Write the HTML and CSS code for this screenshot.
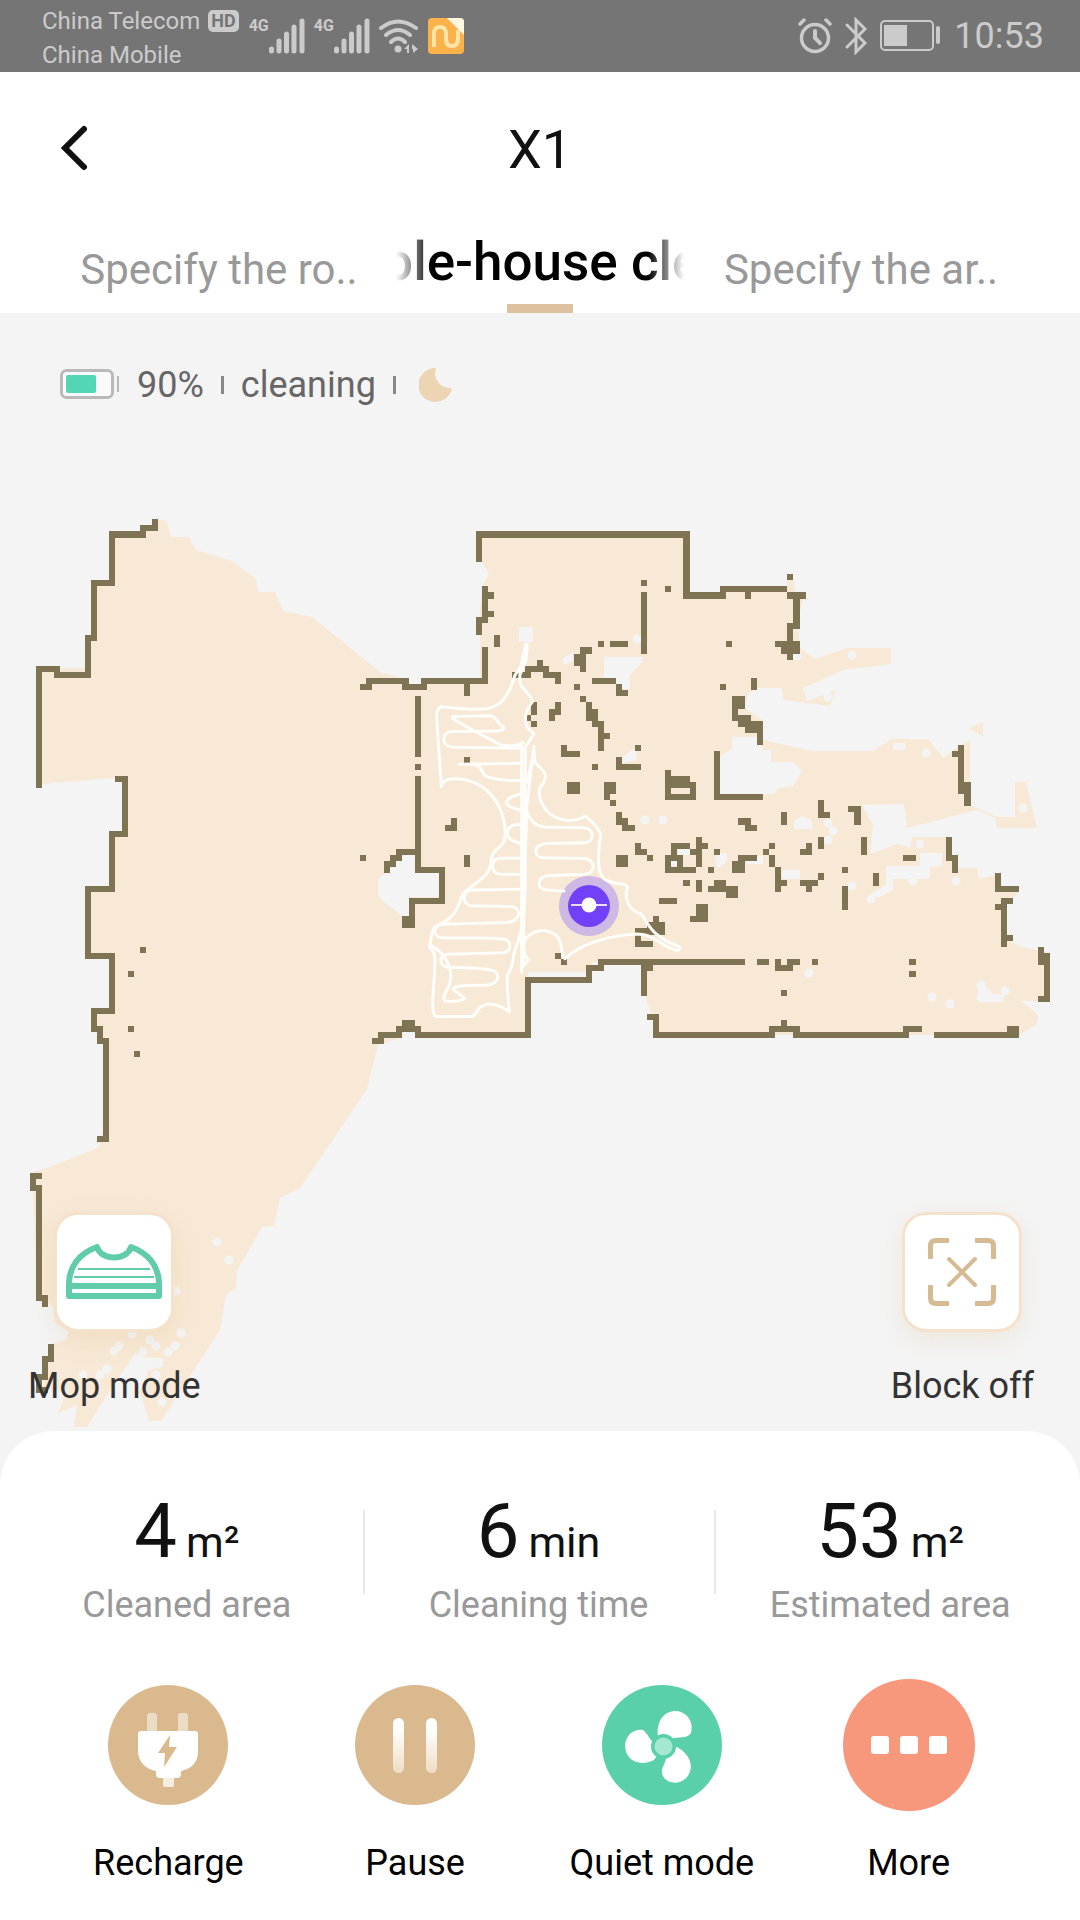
FILE: index.html
```html
<!DOCTYPE html>
<html lang="en">
<head>
<meta charset="utf-8">
<meta name="viewport" content="width=device-width, initial-scale=1">
<title>X1</title>
<link rel="stylesheet" href="styles.css">
</head>
<body>
<div class="app">
  <div class="statusbar">
    <div class="carriers">
      <div class="carrier">China Telecom <span class="hd">HD</span></div>
      <div class="carrier">China Mobile</div>
    </div>
    <div class="signals">
      <div class="signal"><span class="net">4G</span>
        <svg width="36" height="36" viewBox="0 0 36 36"><path d="M2.500 31v2M10 23v10M17.500 16v17M25 9v24M33 3v30" stroke="currentColor" stroke-width="5" stroke-linecap="round"/></svg></div>
      <div class="signal"><span class="net">4G</span>
        <svg width="36" height="36" viewBox="0 0 36 36"><path d="M2.500 31v2M10 23v10M17.500 16v17M25 9v24M33 3v30" stroke="currentColor" stroke-width="5" stroke-linecap="round"/></svg></div>
      <svg class="wifi" width="40" height="36" viewBox="0 0 40 36"><g fill="none" stroke="currentColor" stroke-width="4" stroke-linecap="round"><path d="M2 10Q19 -3 37 10M7 17Q19 7 31 17M12 24Q19 17 26 24"/></g><circle cx="19" cy="31" r="3.500" fill="currentColor"/><path d="M25 31l5-5v9h-2v-4zM33 26l6 5-5 4v-4h-1z" fill="currentColor"/></svg>
      <svg width="36" height="38" viewBox="0 0 36 38"><rect y="1" width="36" height="36" rx="4" fill="#fbb24a"/><path d="M19 1h13q4 0 4 4v13z" fill="#fff6e4"/><path d="M6 30V17q0-7 6-7t6 7v5q0 7 6 7t6-7V13" fill="none" stroke="#ffe5a8" stroke-width="4"/></svg>
    </div>
    <div class="system">
      <svg width="34" height="38" viewBox="0 0 34 38" fill="none" stroke="currentColor" stroke-linecap="round"><circle cx="17" cy="21" r="13.500" stroke-width="3.500"/><path d="M17 14v7l5 5" stroke-width="4"/><path d="M2 7l4-4M32 7l-4-4" stroke-width="3.500"/></svg>
      <svg width="24" height="38" viewBox="0 0 24 38" fill="none" stroke="currentColor" stroke-width="3" stroke-linecap="round"><path d="M3 8l18 18-9 9V3l9 9L3 30"/></svg>
      <svg width="62" height="32" viewBox="0 0 62 32"><rect x="1" y="1" width="52" height="29" rx="4" fill="none" stroke="currentColor" stroke-width="2"/><rect x="4" y="5" width="23" height="21" fill="currentColor"/><rect x="56" y="6" width="4" height="18" rx="2" fill="currentColor"/></svg>
      <span class="clock">10:53</span>
    </div>
  </div>

  <header class="header">
    <button class="back" type="button" aria-label="Back"><svg width="30" height="46" viewBox="0 0 30 46"><path d="M24 4L5 23l19 19" fill="none" stroke="#111" stroke-width="6" stroke-linecap="round"/></svg></button>
    <h1 class="title">X1</h1>
  </header>

  <nav class="tabs">
    <a class="tab" href="#room">Specify the ro..</a>
    <a class="tab active" href="#whole"><span class="marquee">Whole-house cleaning</span></a>
    <a class="tab" href="#area">Specify the ar..</a>
  </nav>

  <main class="map">
    <svg class="plan" viewBox="0 313 1080 1118" role="img" aria-label="Floor map">
      <g class="floor">
        <path d="M158 520H166L171 537H189L196 550 232 561 256 579 258 592H275L283 611 312 617 380 672 400 678H480V645L480 610 482 587 489 573 482 562H479V532H688V594H726V587H787V580H794L795 592H805L800 611 799 641 800 648 814 659 848 648H891V664L843 670 803 688 807 701 836 690 830 706 783 700 782 688H757L748 694 745 708 763 721V740L812 751H873L892 739H928L943 758 952 751 970 740V805L998 817H1015V782H1026L1037 828H997L995 818 977 810 907 828 904 804 862 805 873 825 870 854 897 844 910 848 912 837H947L952 856 958 868H977L979 879 995 875 1001 886 1019 892 1007 904V940L1022 947 1050 953V1001H1020L1034 1011 1038 1016 1037 1024 1019 1035H655V1014L650 1011 645 995V962H592V972H528V1034H415V1031H403V1037L378 1045 367 1089 300 1188 280 1198 274 1226 262 1227 237 1271 236 1288 226 1295 220 1330 161 1421H149L140 1393 110 1390 87 1427H74L77 1405 57 1414 67 1393 43 1388 50 1345 65 1340 69 1332 55 1322 53 1307 37 1293 33 1193V1172L47 1168 98 1148 103 1130V1040L97 1032 94 1010H113V955H88V888H113V833H125V777L42 784V668H88V640H94V583H113V533H145L153 522Z"/>
        <path d="M968 729L983 722V736Z"/>
      </g>
      <g class="void">
        <path d="M402 855H415V872H439V897H409V916H402L384 902 378 895V879L390 870ZM409 676H421V684H409ZM604 657H642V662L630 675V689H616V678H604ZM562 659L573 652V661L564 665ZM622 757L634 749 637 754V760L622 763ZM732 737H757L763 750H771V762H793L802 771 793 786 777 789 775 794H720V756L732 749ZM886 866H920V853H942V866L930 867V879H893V890L880 897H871L872 893 886 885ZM671 860H678V866H671ZM678 849H690V855H678ZM716 853H727V861L719 868 715 864ZM747 860L763 855V864H747ZM782 870H800V879H782ZM794 820L803 816 812 821 813 829H794ZM978 987L984 984 993 994H1001L1005 989 1003 1002H978ZM893 743H905V750H893ZM519 627H533V642H519ZM135 1353L143 1357 163 1358V1367L147 1370V1382L133 1397 113 1392 117 1380Z"/>
        <path class="specks" d="M645 820h0M663 820h0M828 823h0M833 831h0M828 840h0M852 886h0M871 899h0M913 881h0M920 844h0M956 881h0M926 753h0M1023 808h0M852 655h0M828 697h0M797 656h0M809 973h0M932 997h0M950 1004h0M1005 991h0M981 985h0M981 998h0M637 639h0M217 1242h0M229 1260h0M176 1291h0M181 1333h0M132 1334h0M150 1340h0M156 1346h0M175 1346h0M168 1352h0M119 1346h0M114 1351h0M107 1369h0M143 1352h0M100 1375h0M83 1375h0M156 1375h0M162 1402h0M123 1395h0"/>
      </g>
      <!-- one unit is one scanned grid cell -->
      <g class="walls" transform="translate(32.950 522.250) scale(6.108)">
        <path d="M20 0V1H18V2H13V10H10V19H9V25H4V24H1V43M14 42H15V51H13V60H9V71H13V80H10V83H11V85H12V101H11M1 107H0V109H1V127H2V128M3 135V137H2V140H1V142H2M18 70h0M16 74h0M16 83h0M17 87h0M54 55h0"/>
        <path d="M54 27H55V26H61V27H64V26H74V21M71 27V28M73 6V2H107V12H113V11H123M117 11V12M124 12H126M125 12V17H124V22M122 20H125M123 21H125M124 9h0M74 11V16H73V18M74 12H75M74 15H75M76 19V20M100 10h0M100 12V21M104 11h0"/>
        <path d="M93 20h0M95 20H97M91 21H90V24M89 22V23H90M92 26H95M96 27V28H97M89 27h0M90 29h0M91 30V32M92 31V33H93V37M93 35H94M83 23V24M81 24H84V25H86V26M79 25H81V24M82 30V31M81 32h0M82 33h0M86 30V31H85V32M87 37V38H89M99 37h0M96 39V40H99M92 40h0M88 43H89V44H88ZM94 43H95V44H94V45M95 46h0M96 48V49H97V50H98"/>
        <path d="M104 41V45H108V43H104V42H107V43M112 38V45H119M63 29V38M63 40h0M63 42V57H67V62H62V66H61V65M63 54H60V55H59V56H58V57M69 49V50H68M71 39h0M71 55V56M56 85H57V84H60V83H63V84H81V75H91V73H93V72H116M61 83V82H62V83M100 72V77M101 73h0M101 81H102V84H121V83H125V84H143V83H145M123 82V83M148 84H161V83H160"/>
        <path d="M86 71h0M87 72h0M99 67V69H101M99 67H100M102 65V67M101 66H103V67H101ZM103 62H105M109 63H110V65H108M109 63V65M96 55H97V56H96ZM99 53V54H100M101 55h0M107 53H105V55M104 55V57H108M106 55V57M104 55H106M108 54H109M109 52V56M109 53H110M112 54h0M111 57h0M107 59h0M109 59V60M111 60H115V61H114V60M112 59H113V60"/>
        <path d="M114 20h0M113 27h0M118 26V27M116 30V29H115V32H117V33H119V36M116 32V33M117 34H119M116 29V30H115M123 48V49M116 49H117V50H118M129 46V48H130M134 47H135V49M129 52V53M136 52V54M127 53V54H126M121 53h0M120 54h0M121 55V56M122 57V60M122 59H123M118 55H116V57H115V56H116M126 59H128M127 59V60M129 58h0M133 57h0M133 60V63M138 58V59M143 55H144M150 52V55H151V57M152 37V44M151 38H152M153 43V46M152 43H153M158 58V60H161M160 62H159V69M158 63H159M160 68H159M165 70V72M165 71H166V78H165M119 72H120M122 72V73H124V72H125M128 72h0M144 72h0M144 74h0M123 77h0"/>
      </g>
      <circle cx="589" cy="906" r="30" fill="#cdb9e4"/>
      <g class="track" transform="translate(340 500) scale(.33333 .35714)">
        <path d="M557 405C555 460 540 470 525 490C515 520 500 572 445 584C400 590 340 582 305 579C285 585 290 600 292 640L304 802C310 780 330 780 360 781C440 790 495 850 496 940C490 985 455 965 452 1020C445 1065 380 1080 365 1110C350 1160 330 1175 285 1195C270 1215 275 1230 268 1252C290 1270 285 1290 283 1330L278 1400C278 1430 280 1446 290 1446H395C415 1440 408 1425 425 1418C450 1405 475 1412 508 1433C505 1400 500 1380 502 1330C520 1310 515 1290 525 1260C560 1180 555 1100 556 1000L560 860 582 690"/>
        <path d="M268 1245C320 1270 335 1310 332 1340C330 1370 300 1390 315 1403C340 1405 360 1405 372 1396C360 1380 345 1380 340 1368C350 1358 380 1360 440 1358C480 1355 480 1325 460 1318C420 1308 340 1310 325 1308C295 1305 295 1275 325 1272L490 1268C515 1265 515 1235 495 1230C430 1222 330 1230 300 1225C275 1215 280 1190 310 1188L500 1183C545 1180 545 1142 515 1138L390 1136C365 1125 368 1095 395 1092L545 1090"/>
        <path d="M548 1050C520 1045 480 1052 468 1045C450 1030 455 1005 480 1003H548M548 963C510 955 500 945 502 930C505 912 520 908 548 908M548 870C510 862 498 855 500 845C505 830 530 825 550 822M550 785C500 788 450 780 435 772C420 750 420 745 400 740H358L540 737M548 695L340 692C300 690 305 650 335 648L470 647C490 645 495 640 490 636C470 625 470 605 450 604L340 606C325 610 360 625 480 685C510 690 530 690 550 680"/>
        <path d="M545 1322V680M550 1300L556 700M557 405C550 440 535 480 540 510C545 535 575 540 577 566C555 590 550 620 565 640L582 655 550 700M562 405L558 450 540 490"/>
        <path d="M562 790L582 700 585 735C620 765 620 770 612 790C590 810 595 840 620 870C650 900 700 905 737 885C790 930 785 940 778 960C775 1010 770 1050 800 1065C830 1080 860 1070 863 1085C850 1120 870 1150 905 1160C930 1200 945 1225 1020 1252Q1022 1270 980 1250C930 1220 920 1215 885 1215C800 1220 720 1245 675 1284C660 1270 670 1240 650 1220C620 1200 590 1200 560 1225C545 1240 550 1270 565 1288L545 1310"/>
        <path d="M558 860C565 900 590 914 620 916L730 918C765 920 765 955 735 960L620 962C580 965 580 995 605 1002L735 1004C770 1010 765 1045 735 1048L620 1052C590 1060 590 1088 620 1092L672 1095"/>
      </g>
      <circle cx="589" cy="906" r="21" fill="#7240f8"/>
      <path d="M571 905H607" stroke="#e9dcff" stroke-width="2"/>
      <circle cx="589" cy="905" r="7.500" fill="#fff"/>
    </svg>

    <div class="overlay">
      <div class="state">
        <svg width="60" height="32" viewBox="0 0 60 32"><rect x="1.500" y="1.500" width="51" height="27" rx="5" fill="#fafafa" stroke="#b9b9b9" stroke-width="3"/><rect x="6" y="6" width="30" height="18" rx="2" fill="#52d6b4"/><path d="M58 7v16" stroke="#b9b9b9" stroke-width="2"/></svg>
        <span>90%</span><i class="bar"></i><span>cleaning</span><i class="bar"></i>
        <svg class="moon" width="34" height="34" viewBox="0 0 34 34"><path d="M17 0A17 17 0 1 0 33 20A15 15 0 0 1 17 0Z" fill="#edd5b4"/></svg>
      </div>
      <div class="tools">
        <button class="tool" type="button">
          <span class="tile"><svg width="96" height="60" viewBox="0 0 96 60"><path d="M31 5C14 11 3 24 3 42V54H93V42C93 24 82 11 65 5C61 19 35 19 31 5Z" fill="none" stroke="#60ccaa" stroke-width="6" stroke-linejoin="round"/><path d="M12 27H84M8 35H88" stroke="#60ccaa" stroke-width="2"/><path d="M4 44H92" stroke="#60ccaa" stroke-width="6"/></svg></span>
          Mop mode
        </button>
        <button class="tool" type="button">
          <span class="tile"><svg width="68" height="68" viewBox="0 0 68 68" fill="none" stroke="#d6ba91" stroke-width="5"><path d="M2.500 21V8Q2.500 2.500 8 2.500H21M47 2.500H60Q65.500 2.500 65.500 8V21M65.500 47V60Q65.500 65.500 60 65.500H47M21 65.500H8Q2.500 65.500 2.500 60V47"/><path d="M21 21L47 47M47 21L21 47" stroke-width="4" stroke-linecap="round"/></svg></span>
          Block off
        </button>
      </div>
    </div>
  </main>

  <section class="panel">
    <dl class="stats">
      <div class="stat"><dt>Cleaned area</dt><dd>4<small>m²</small></dd></div>
      <div class="stat"><dt>Cleaning time</dt><dd>6<small>min</small></dd></div>
      <div class="stat"><dt>Estimated area</dt><dd>53<small>m²</small></dd></div>
    </dl>
    <div class="actions">
      <button class="action" type="button">
        <span class="icon"><svg width="120" height="120" viewBox="0 0 120 120"><circle cx="60" cy="60" r="60" fill="#dab98f"/><path d="M39 46V31q0-3 3-3h4q3 0 3 3v15zM70 46V31q0-3 3-3h4q3 0 3 3v15z" fill="#ecdcc6"/><path d="M55 92h11v8q0 2-2 2h-7q-2 0-2-2z" fill="#f6ecdf"/><path d="M33 46H87q3 0 3 3V66C90 78 83 84 73 86V89q0 4-4 4H52q-4 0-4-4V86C37 84 30 76 30 66V49q0-3 3-3Z" fill="#fff"/><path d="M62 50L50 68H57L56 82 69 62H61Z" fill="#dab98f"/></svg></span>
        Recharge
      </button>
      <button class="action" type="button">
        <span class="icon"><svg width="120" height="120" viewBox="0 0 120 120"><defs><linearGradient id="fade" x1="0" y1="0" x2="0" y2="1"><stop offset=".2" stop-color="#fff"/><stop offset="1" stop-color="#efdcc4"/></linearGradient></defs><circle cx="60" cy="60" r="60" fill="#dab98f"/><rect x="38" y="33" width="11" height="55" rx="5.500" fill="url(#fade)"/><rect x="71" y="33" width="11" height="55" rx="5.500" fill="url(#fade)"/></svg></span>
        Pause
      </button>
      <button class="action" type="button">
        <span class="icon"><svg width="120" height="120" viewBox="0 0 120 120"><circle cx="60" cy="60" r="60" fill="#59d0aa"/><g fill="#fff"><path d="M56 52C54 36 62 26 74 26C86 27 92 38 89 48C86 53 80 52 72 53L62 61Z"/><path d="M52 75C38 82 23 76 23 60C24 50 32 43 41 45C46 49 47 54 52 58L62 61Z"/><path d="M75 62C88 69 93 82 85 92C78 101 62 99 60 88C59 83 63 80 64 73L62 61Z"/></g><circle cx="61.500" cy="61.500" r="12.500" fill="#59d0aa"/><circle cx="61.500" cy="61.500" r="9" fill="#a5e8d2"/></svg></span>
        Quiet mode
      </button>
      <button class="action" type="button">
        <span class="icon"><svg width="132" height="132" viewBox="0 0 132 132"><circle cx="66" cy="66" r="66" fill="#f7987c"/><g fill="#fff"><rect x="28" y="57" width="18" height="18" rx="3"/><rect x="57" y="57" width="18" height="18" rx="3"/><rect x="86" y="57" width="18" height="18" rx="3"/></g></svg></span>
        More
      </button>
    </div>
  </section>
</div>
</body>
</html>
```
FILE: styles.css
```css
* { box-sizing: border-box; }
body {
  margin: 0;
  background: #fff;
  color: #111;
  font-family: Roboto, "Liberation Sans", sans-serif;
}
svg { display: block; flex: none; }
button {
  padding: 0;
  border: 0;
  background: none;
  color: inherit;
  font: inherit;
  cursor: pointer;
}
.app { min-height: 100vh; display: flex; flex-direction: column; }

.statusbar {
  height: 72px;
  padding: 0 36px 0 42px;
  display: flex;
  align-items: center;
  background: #757575;
  color: #cbcbcb;
}
.carriers { padding-top: 4px; }
.carrier {
  display: flex;
  align-items: center;
  gap: 8px;
  font-size: 24px;
  line-height: 34px;
}
.hd {
  padding: 0 3px;
  border-radius: 5px;
  background: #cbcbcb;
  color: #757575;
  font-size: 18px;
  font-weight: 700;
  line-height: 22px;
}
.signals { display: flex; align-items: center; gap: 9px; margin-left: 10px; }
.signal { display: flex; align-items: flex-start; }
.net { font-size: 16px; font-weight: 700; line-height: 16px; }
.system { display: flex; align-items: center; gap: 12px; margin-left: auto; }
.clock { font-size: 36px; line-height: 40px; }

.header {
  height: 152px;
  padding: 0 60px;
  display: grid;
  grid-template-columns: 1fr auto 1fr;
  align-items: center;
}
.back { justify-self: start; }
.title { margin: 0; padding-top: 4px; font-size: 54px; font-weight: 400; line-height: 64px; }

.tabs {
  height: 89px;
  padding: 0 78px;
  display: grid;
  grid-template-columns: 1fr 288px 1fr;
  gap: 36px;
}
.tab {
  color: #999;
  font-size: 42px;
  line-height: 48px;
  padding-top: 22px;
  text-align: center;
  text-decoration: none;
  white-space: nowrap;
}
.tab.active {
  padding-top: 8px;
  color: #000;
  font-size: 53px;
  font-weight: 500;
  line-height: 60px;
  display: flex;
  flex-direction: column;
  justify-content: space-between;
}
.tab.active::after {
  content: "";
  width: 66px;
  height: 9px;
  align-self: center;
  background: #dec19f;
}
.marquee {
  overflow: hidden;
  text-align: left;
  text-indent: -89px;
  -webkit-mask-image: linear-gradient(90deg, transparent, #000 36px, #000 calc(100% - 36px), transparent);
  mask-image: linear-gradient(90deg, transparent, #000 36px, #000 calc(100% - 36px), transparent);
}

.map { display: grid; background: #f4f4f4; }
.plan, .overlay { grid-area: 1 / 1; }
.plan { width: 100%; height: auto; }
.floor { fill: #f7e9d5; }
.void { fill: #f4f4f4; }
.specks { fill: none; stroke: #f4f4f4; stroke-width: 9px; stroke-linecap: round; }
.walls { fill: none; stroke: #7e7353; stroke-width: 1px; stroke-linecap: square; shape-rendering: crispEdges; }
.track { fill: none; stroke: #fffefa; stroke-linecap: round; stroke-linejoin: round; }
.track path { stroke-width: 3px; vector-effect: non-scaling-stroke; }

.overlay {
  padding: 48px 28px 23px;
  display: flex;
  flex-direction: column;
  justify-content: space-between;
}
.state {
  padding-left: 32px;
  display: flex;
  align-items: center;
  gap: 17px;
  color: #666;
  font-size: 36px;
  line-height: 48px;
}
.bar { width: 3px; height: 18px; background: #888; }
.moon { margin-left: 6px; }
.tools { display: flex; justify-content: space-between; padding-right: 18px; }
.tool {
  display: flex;
  flex-direction: column;
  align-items: center;
  gap: 32px;
  color: #333;
  font-size: 36px;
  line-height: 44px;
}
.tile {
  width: 120px;
  height: 120px;
  display: grid;
  place-items: center;
  border: 3px solid #f5e2cc;
  border-radius: 24px;
  background: #fff;
  box-shadow: 0 8px 24px rgba(210, 160, 100, .16);
}

.panel {
  flex: 1;
  padding: 64px 14px 32px 11px;
  border-radius: 54px 54px 0 0;
  background: #fff;
  box-shadow: 0 -54px 0 54px #f4f4f4;
  clip-path: inset(0);
}
.stats {
  margin: 0;
  display: grid;
  grid-template-columns: repeat(3, 1fr);
}
.stat {
  position: relative;
  display: flex;
  flex-direction: column-reverse;
  align-items: center;
  gap: 16px;
}
.stat + .stat::before {
  content: "";
  position: absolute;
  left: 0;
  top: 15px;
  width: 2px;
  height: 84px;
  background: #e8e8e8;
}
.stat dt { color: #999; font-size: 36px; line-height: 44px; }
.stat dd {
  margin: 0;
  display: flex;
  align-items: baseline;
  gap: 9px;
  font-size: 76px;
  line-height: 72px;
}
.stat small { font-size: 43px; line-height: 48px; }

.actions {
  padding: 0 34px;
  margin-top: 52px;
  display: grid;
  grid-template-columns: repeat(4, 1fr);
}
.action {
  display: flex;
  flex-direction: column;
  align-items: center;
  gap: 30px;
  color: #000;
  font-size: 36px;
  line-height: 44px;
  white-space: nowrap;
}
.icon { height: 132px; display: grid; place-items: center; }
```
